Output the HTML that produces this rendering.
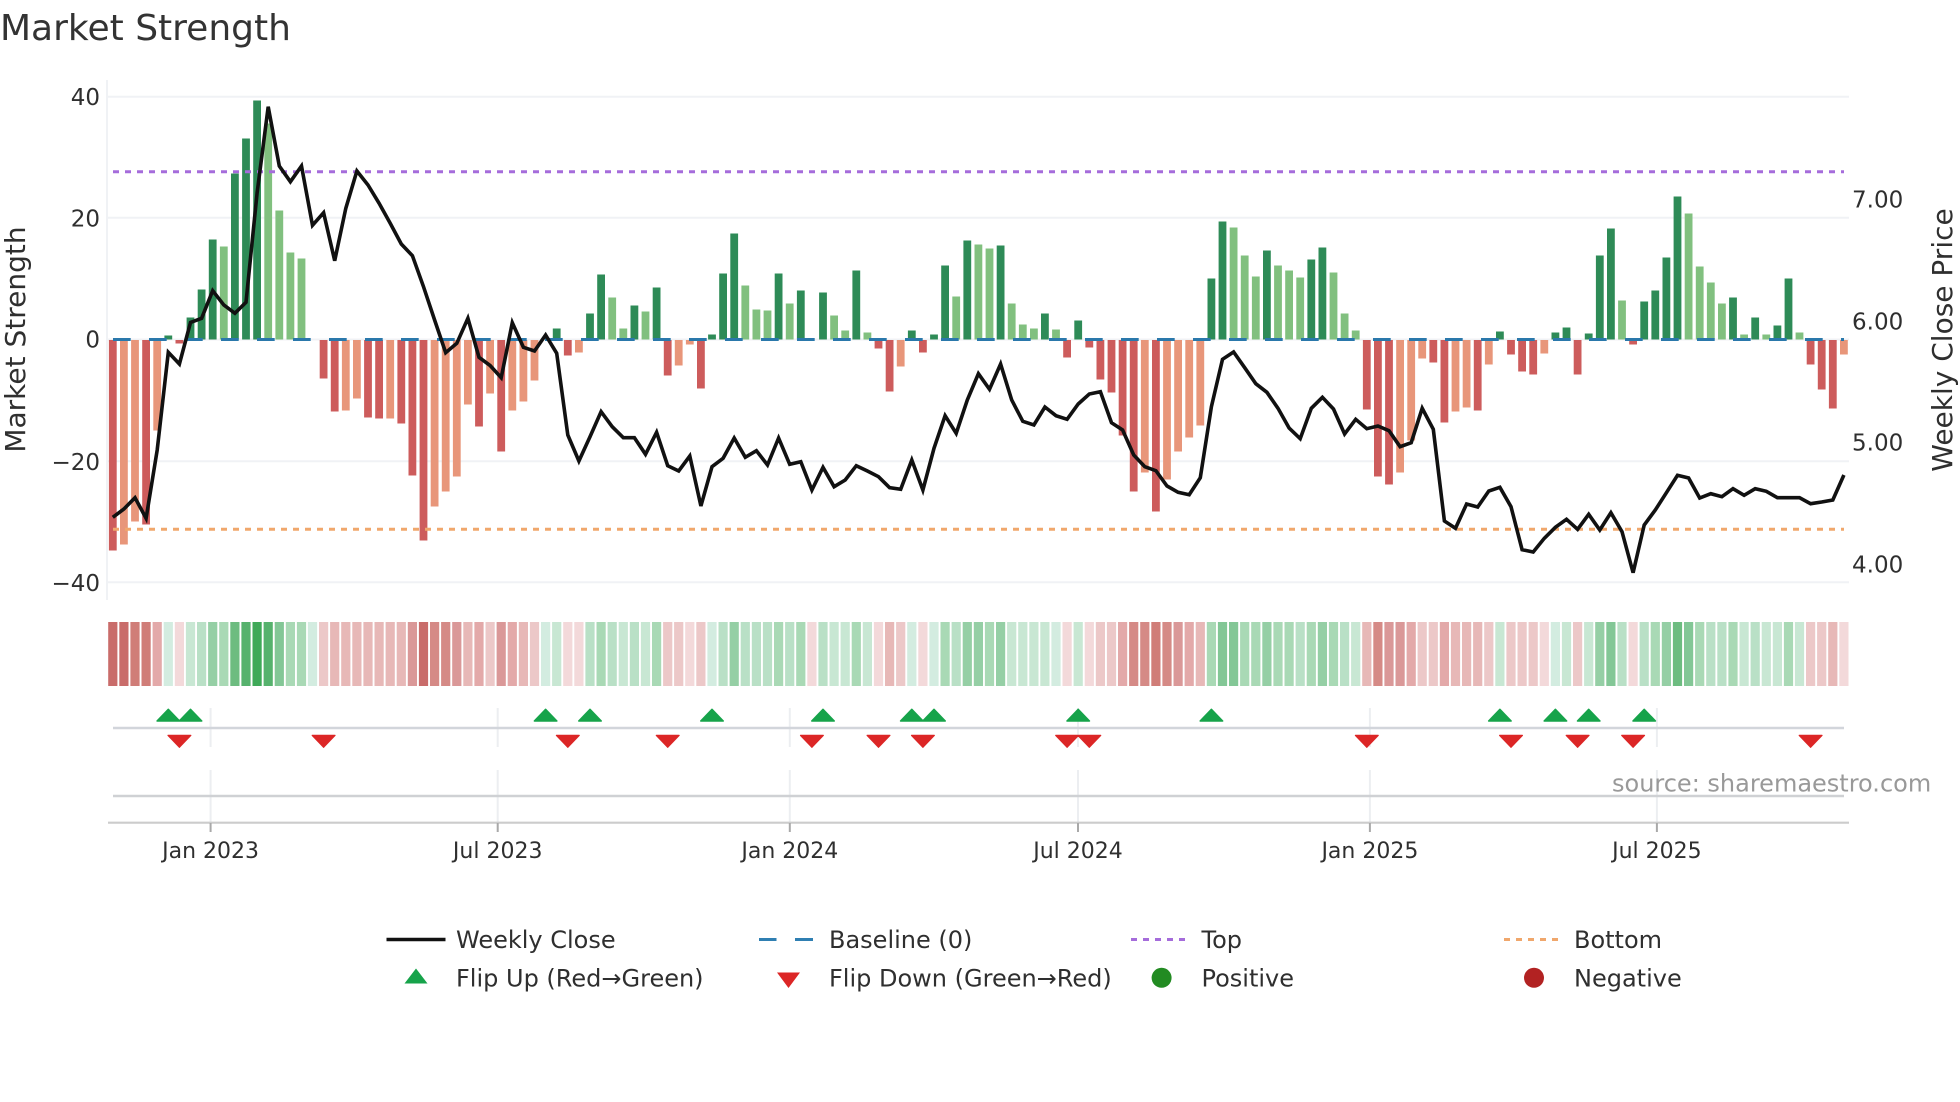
<!DOCTYPE html>
<html lang="en"><head><meta charset="utf-8"><title>Market Strength</title>
<style>
html,body{margin:0;padding:0;background:#fff;width:1960px;height:1102px;overflow:hidden}
svg{display:block}
text{font-family:"DejaVu Sans","Liberation Sans",sans-serif;fill:#2f2f2f}
.t{font-size:23px}.x{font-size:22px;text-anchor:middle}.l{font-size:24px}
.r{text-anchor:end}
.h{stroke-width:9.2;fill:none}.b{stroke-width:7.8;fill:none}
</style></head><body>
<svg width="1960" height="1102" viewBox="0 0 1960 1102" xmlns="http://www.w3.org/2000/svg">
<rect width="1960" height="1102" fill="#fff"/>
<text x="0" y="40" font-size="36" style="fill:#333">Market Strength</text>

<path d="M107 80V600M107 96.7H1849M107 217.7H1849M107 339.5H1849M107 461.3H1849M107 582.3H1849" stroke="#f0f2f5" stroke-width="2" fill="none"/>

<path class="b" stroke="#2e8b57" d="M168.3 339.5V335.5M190.5 339.5V317.5M201.6 339.5V289.5M212.7 339.5V239.5M234.9 339.5V173.5M246 339.5V138.5M257.1 339.5V100.5M556.7 339.5V328.5M590 339.5V313.5M601.1 339.5V274.5M634.4 339.5V305.5M656.6 339.5V287.5M712 339.5V334.5M723.1 339.5V273.5M734.2 339.5V233.5M778.6 339.5V273.5M800.8 339.5V290.5M823 339.5V292.5M856.3 339.5V270.5M911.8 339.5V330.5M934 339.5V334.5M945.1 339.5V265.5M967.3 339.5V240.5M1000.6 339.5V245.5M1044.9 339.5V313.5M1078.2 339.5V320.5M1211.4 339.5V278.5M1222.5 339.5V221.5M1266.9 339.5V250.5M1311.3 339.5V259.5M1322.4 339.5V247.5M1499.9 339.5V331.5M1555.4 339.5V332.5M1566.5 339.5V327.5M1588.7 339.5V333.5M1599.8 339.5V255.5M1610.9 339.5V228.5M1644.2 339.5V301.5M1655.3 339.5V290.5M1666.4 339.5V257.5M1677.5 339.5V196.5M1733 339.5V297.5M1755.2 339.5V317.5M1777.4 339.5V325.5M1788.5 339.5V278.5"/>
<path class="b" stroke="#81c07f" d="M223.8 339.5V246.5M268.2 339.5V123.5M279.3 339.5V210.5M290.4 339.5V252.5M301.5 339.5V258.5M612.2 339.5V297.5M623.3 339.5V328.5M645.5 339.5V311.5M745.3 339.5V285.5M756.4 339.5V309.5M767.5 339.5V310.5M789.7 339.5V303.5M834.1 339.5V315.5M845.2 339.5V330.5M867.4 339.5V332.5M956.2 339.5V296.5M978.4 339.5V244.5M989.5 339.5V248.5M1011.7 339.5V303.5M1022.8 339.5V324.5M1033.9 339.5V328.5M1056 339.5V329.5M1233.6 339.5V227.5M1244.7 339.5V255.5M1255.8 339.5V276.5M1278 339.5V265.5M1289.1 339.5V270.5M1300.2 339.5V277.5M1333.5 339.5V272.5M1344.6 339.5V313.5M1355.7 339.5V330.5M1622 339.5V300.5M1688.6 339.5V213.5M1699.7 339.5V266.5M1710.8 339.5V282.5M1721.9 339.5V303.5M1744.1 339.5V334.5M1766.3 339.5V334.5M1799.5 339.5V332.5"/>
<path class="b" stroke="#cd5c5c" d="M112.8 340V550.5M146.1 340V524.5M179.4 340V343.5M323.6 340V378.5M334.7 340V411.5M368 340V417.5M379.1 340V418.5M401.3 340V423.5M412.4 340V475.5M423.5 340V540.5M479 340V426.5M501.2 340V451.5M567.8 340V355.5M667.7 340V375.5M700.9 340V388.5M878.5 340V348.5M889.6 340V391.5M922.9 340V352.5M1067.1 340V357.5M1089.3 340V347.5M1100.4 340V379.5M1111.5 340V392.5M1122.6 340V435.5M1133.7 340V491.5M1155.9 340V511.5M1366.8 340V409.5M1377.9 340V476.5M1389 340V484.5M1433.3 340V362.5M1444.4 340V422.5M1477.7 340V410.5M1511 340V354.5M1522.1 340V371.5M1533.2 340V374.5M1577.6 340V374.5M1633.1 340V344.5M1810.6 340V364.5M1821.7 340V389.5M1832.8 340V408.5"/>
<path class="b" stroke="#e8967a" d="M123.9 340V544.5M135 340V521.5M157.2 340V430.5M345.8 340V410.5M356.9 340V398.5M390.2 340V418.5M434.6 340V506.5M445.7 340V491.5M456.8 340V476.5M467.9 340V404.5M490.1 340V393.5M512.3 340V410.5M523.4 340V401.5M534.5 340V380.5M578.9 340V352.5M678.7 340V365.5M689.8 340V344.5M900.7 340V366.5M1144.8 340V472.5M1167 340V479.5M1178.1 340V451.5M1189.2 340V437.5M1200.3 340V425.5M1400.1 340V472.5M1411.2 340V440.5M1422.2 340V358.5M1455.5 340V411.5M1466.6 340V407.5M1488.8 340V364.5M1544.3 340V353.5M1843.9 340V354.5"/>

<path d="M113 339.5H1844" stroke="#2a78ab" stroke-width="3" stroke-dasharray="17.7 18.3" fill="none"/>
<path d="M113 171.7H1844" stroke="#a56cdb" stroke-width="3" stroke-dasharray="6 6" fill="none"/>
<path d="M113 529.3H1844" stroke="#f0a76c" stroke-width="3" stroke-dasharray="6 6" fill="none"/>

<polyline fill="none" stroke="#111" stroke-width="3.6" stroke-linejoin="miter" points="112.8,517.3 123.9,509 135,497.7 146.1,518.3 157.2,450 168.3,352.3 179.4,364 190.5,322.5 201.6,318.3 212.7,290.7 223.8,305 234.9,313.3 246,302.3 257.1,193 268.2,106.7 279.3,166 290.4,181.7 301.5,166 312.5,225.3 323.6,212.7 334.7,260.7 345.8,208.3 356.9,171 368,185 379.1,203.3 390.2,223.3 401.3,244 412.4,255.7 423.5,286.7 434.6,320 445.7,352.7 456.8,343.3 467.9,318.3 479,357.3 490.1,365.5 501.2,377.7 512.3,322.7 523.4,347.3 534.5,351 545.6,335 556.7,353.3 567.8,435 578.9,461 590,436.7 601.1,411.7 612.2,426.7 623.3,437.7 634.4,437.7 645.5,454.3 656.6,432.3 667.7,465.7 678.7,471 689.8,456 700.9,506 712,466.7 723.1,458.3 734.2,438 745.3,457.3 756.4,450.7 767.5,465 778.6,438 789.7,464.3 800.8,461.7 811.9,490 823,467.3 834.1,486.7 845.2,480 856.3,465.7 867.4,471 878.5,476.7 889.6,487.7 900.7,489.3 911.8,460 922.9,490 934,448.3 945.1,415.7 956.2,433.3 967.3,400 978.4,373.7 989.5,389.3 1000.6,364 1011.7,400 1022.8,421.3 1033.9,425 1044.9,407 1056,415.7 1067.1,419.3 1078.2,404 1089.3,394 1100.4,391.7 1111.5,422.7 1122.6,430 1133.7,455 1144.8,466.7 1155.9,470.7 1167,486 1178.1,492.3 1189.2,494.7 1200.3,477.7 1211.4,406.7 1222.5,359.3 1233.6,352 1244.7,367.7 1255.8,383.7 1266.9,392.3 1278,408.3 1289.1,428 1300.2,438.7 1311.3,408.3 1322.4,397.3 1333.5,409 1344.6,434 1355.7,419.3 1366.8,428.7 1377.9,426 1389,430.7 1400.1,446.7 1411.2,442.7 1422.2,408.3 1433.3,429.3 1444.4,521 1455.5,528.3 1466.6,504 1477.7,507 1488.8,491 1499.9,487.3 1511,506.7 1522.1,549.7 1533.2,552 1544.3,538.3 1555.4,527.3 1566.5,519.3 1577.6,529.3 1588.7,514.3 1599.8,530 1610.9,512.7 1622,531.7 1633.1,572.7 1644.2,525 1655.3,510 1666.4,492.7 1677.5,475.3 1688.6,478 1699.7,498 1710.8,493.7 1721.9,496.7 1733,488.7 1744.1,495.3 1755.2,488.7 1766.3,491.3 1777.4,497.7 1788.5,497.7 1799.5,497.7 1810.6,503.7 1821.7,502 1832.8,500 1843.9,475"/>

<text class="t r" x="100" y="105">40</text>
<text class="t r" x="100" y="226.5">20</text>
<text class="t r" x="100" y="347.5">0</text>
<text class="t r" x="100" y="470">−20</text>
<text class="t r" x="100" y="591">−40</text>
<text class="t" x="1852" y="207.7">7.00</text>
<text class="t" x="1852" y="329.3">6.00</text>
<text class="t" x="1852" y="450.7">5.00</text>
<text class="t" x="1852" y="572.5">4.00</text>
<text transform="translate(25 339.5) rotate(-90)" font-size="28" text-anchor="middle">Market Strength</text>
<text transform="translate(1952 340) rotate(-90)" font-size="28" text-anchor="middle">Weekly Close Price</text>

<!-- heat strip -->
<path class="h" stroke="#c96c6a" d="M112.8 622v64M123.9 622v64M423.5 622v64"/>
<path class="h" stroke="#d07d78" d="M135 622v64M146.1 622v64M1155.9 622v64"/>
<path class="h" stroke="#d58a86" d="M434.6 622v64M445.7 622v64M1133.7 622v64M1144.8 622v64M1167 622v64M1377.9 622v64"/>
<path class="h" stroke="#da9898" d="M412.4 622v64M456.8 622v64M501.2 622v64M1178.1 622v64M1389 622v64M1400.1 622v64"/>
<path class="h" stroke="#e3a9a9" d="M157.2 622v64M479 622v64M512.3 622v64M1122.6 622v64M1189.2 622v64M1411.2 622v64M1444.4 622v64"/>
<path class="h" stroke="#e7b8b7" d="M334.7 622v64M345.8 622v64M356.9 622v64M368 622v64M379.1 622v64M390.2 622v64M401.3 622v64M467.9 622v64M523.4 622v64M889.6 622v64M1200.3 622v64M1366.8 622v64M1455.5 622v64M1466.6 622v64M1477.7 622v64M1832.8 622v64"/>
<path class="h" stroke="#ecc8c8" d="M323.6 622v64M490.1 622v64M534.5 622v64M667.7 622v64M678.7 622v64M700.9 622v64M900.7 622v64M1100.4 622v64M1111.5 622v64M1422.2 622v64M1433.3 622v64M1488.8 622v64M1511 622v64M1522.1 622v64M1533.2 622v64M1577.6 622v64M1821.7 622v64M1810.6 622v64"/>
<path class="h" stroke="#f3d9da" d="M179.4 622v64M567.8 622v64M578.9 622v64M689.8 622v64M811.9 622v64M878.5 622v64M922.9 622v64M1067.1 622v64M1089.3 622v64M1544.3 622v64M1633.1 622v64M1843.9 622v64"/>
<path class="h" stroke="#d3ece0" d="M168.3 622v64M312.5 622v64M545.6 622v64M712 622v64M911.8 622v64M934 622v64M1056 622v64M1555.4 622v64"/>
<path class="h" stroke="#c8e7d3" d="M190.5 622v64M556.7 622v64M623.3 622v64M645.5 622v64M834.1 622v64M845.2 622v64M867.4 622v64M1011.7 622v64M1022.8 622v64M1033.9 622v64M1044.9 622v64M1078.2 622v64M1355.7 622v64M1499.9 622v64M1566.5 622v64M1588.7 622v64M1744.1 622v64M1766.3 622v64M1777.4 622v64M1799.5 622v64"/>
<path class="h" stroke="#b9e0c6" d="M201.6 622v64M590 622v64M612.2 622v64M634.4 622v64M723.1 622v64M745.3 622v64M756.4 622v64M767.5 622v64M789.7 622v64M823 622v64M956.2 622v64M1300.2 622v64M1344.6 622v64M1622 622v64M1644.2 622v64M1710.8 622v64M1721.9 622v64M1755.2 622v64"/>
<path class="h" stroke="#a9d9b5" d="M223.8 622v64M290.4 622v64M301.5 622v64M601.1 622v64M656.6 622v64M778.6 622v64M800.8 622v64M856.3 622v64M945.1 622v64M989.5 622v64M1211.4 622v64M1244.7 622v64M1255.8 622v64M1278 622v64M1289.1 622v64M1311.3 622v64M1333.5 622v64M1655.3 622v64M1699.7 622v64M1733 622v64M1788.5 622v64"/>
<path class="h" stroke="#95cfa5" d="M212.7 622v64M734.2 622v64M967.3 622v64M978.4 622v64M1000.6 622v64M1266.9 622v64M1322.4 622v64M1599.8 622v64M1666.4 622v64"/>
<path class="h" stroke="#83c796" d="M279.3 622v64M1222.5 622v64M1233.6 622v64M1610.9 622v64M1688.6 622v64"/>
<path class="h" stroke="#6dbc80" d="M234.9 622v64M1677.5 622v64"/>
<path class="h" stroke="#56b26d" d="M246 622v64M268.2 622v64"/>
<path class="h" stroke="#3fa958" d="M257.1 622v64"/>

<!-- event panels -->
<path d="M210.6 708V747M497.7 708V747M789.8 708V747M1078 708V747M1369.9 708V747M1656.9 708V747M210.6 770V823M497.7 770V823M789.8 770V823M1078 770V823M1369.9 770V823M1656.9 770V823" stroke="#eceef1" stroke-width="2" fill="none"/>
<path d="M113 728H1844" stroke="#d2d5db" stroke-width="2.4" fill="none"/>
<path d="M113 796H1844" stroke="#cfd1d4" stroke-width="2.4" fill="none"/>
<path d="M108 822.7H1849" stroke="#cccccc" stroke-width="2.2" fill="none"/>
<path d="M210.6 823V832M497.7 823V832M789.8 823V832M1078 823V832M1369.9 823V832M1656.9 823V832" stroke="#a9a9a9" stroke-width="2" fill="none"/>
<path fill="#16a34a" stroke="#16a34a" stroke-width="1.4" stroke-linejoin="round" d="M157 721l11.3-11.8 11.3 11.8zM179.2 721l11.3-11.8 11.3 11.8zM534.3 721l11.3-11.8 11.3 11.8zM578.7 721l11.3-11.8 11.3 11.8zM700.7 721l11.3-11.8 11.3 11.8zM811.7 721l11.3-11.8 11.3 11.8zM900.5 721l11.3-11.8 11.3 11.8zM922.7 721l11.3-11.8 11.3 11.8zM1066.9 721l11.3-11.8 11.3 11.8zM1200.1 721l11.3-11.8 11.3 11.8zM1488.6 721l11.3-11.8 11.3 11.8zM1544.1 721l11.3-11.8 11.3 11.8zM1577.4 721l11.3-11.8 11.3 11.8zM1632.9 721l11.3-11.8 11.3 11.8z"/>
<path fill="#dc2626" stroke="#dc2626" stroke-width="1.4" stroke-linejoin="round" d="M168.1 735.4l11.3 11.8 11.3-11.8zM312.3 735.4l11.3 11.8 11.3-11.8zM556.5 735.4l11.3 11.8 11.3-11.8zM656.4 735.4l11.3 11.8 11.3-11.8zM800.6 735.4l11.3 11.8 11.3-11.8zM867.2 735.4l11.3 11.8 11.3-11.8zM911.6 735.4l11.3 11.8 11.3-11.8zM1055.8 735.4l11.3 11.8 11.3-11.8zM1078 735.4l11.3 11.8 11.3-11.8zM1355.5 735.4l11.3 11.8 11.3-11.8zM1499.7 735.4l11.3 11.8 11.3-11.8zM1566.3 735.4l11.3 11.8 11.3-11.8zM1621.8 735.4l11.3 11.8 11.3-11.8zM1799.3 735.4l11.3 11.8 11.3-11.8z"/>

<text x="1612" y="791.5" font-size="24" style="fill:#999">source: sharemaestro.com</text>

<text class="x" x="210.6" y="858">Jan 2023</text>
<text class="x" x="497.7" y="858">Jul 2023</text>
<text class="x" x="789.8" y="858">Jan 2024</text>
<text class="x" x="1078" y="858">Jul 2024</text>
<text class="x" x="1369.9" y="858">Jan 2025</text>
<text class="x" x="1656.9" y="858">Jul 2025</text>

<!-- legend -->
<path d="M386.5 939.5H445.5" stroke="#111" stroke-width="3.6" fill="none"/>
<path d="M759 939.5H776.5M795 939.5H813" stroke="#2f7fb2" stroke-width="3" fill="none"/>
<path d="M1131 939.5H1186" stroke="#a56cdb" stroke-width="3" stroke-dasharray="6 6" fill="none"/>
<path d="M1504 939.5H1559" stroke="#f0a76c" stroke-width="3" stroke-dasharray="6 6" fill="none"/>
<path d="M404.5 983.5L416 968.5 427.5 983.5z" fill="#16a34a"/>
<path d="M777 972.5L788.5 988 800 972.5z" fill="#dc2626"/>
<circle cx="1161.6" cy="977.8" r="10" fill="#228b22"/>
<circle cx="1534" cy="977.8" r="10" fill="#b22222"/>
<text class="l" x="456" y="948">Weekly Close</text>
<text class="l" x="829" y="948">Baseline (0)</text>
<text class="l" x="1201.5" y="948">Top</text>
<text class="l" x="1574" y="948">Bottom</text>
<text class="l" x="456" y="986.5">Flip Up (Red→Green)</text>
<text class="l" x="829" y="986.5">Flip Down (Green→Red)</text>
<text class="l" x="1201.5" y="986.5">Positive</text>
<text class="l" x="1574" y="986.5">Negative</text>
</svg>
</body></html>
